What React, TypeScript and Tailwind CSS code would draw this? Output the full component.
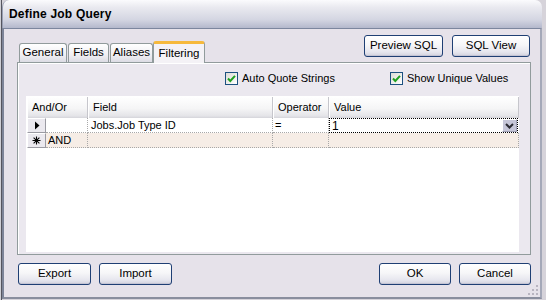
// Define Job Query dialog, XP-style look

import React from "react";

const cellDotted = "border-r border-b border-dotted border-[#a8a8a8]";

// plain XP push button
const XpButton = ({ label, className }: { label: string; className: string }) => (
  <div
    className={
      "h-[22px] rounded-[3px] border border-[#1f3f74] bg-[linear-gradient(to_bottom,#ffffff_0%,#f6f6f8_45%,#e6e6ee_80%,#d2d2de_100%)] shadow-[inset_0_-1px_0_#c4c4d4] flex items-center justify-center text-[11.5px] text-black " +
      className
    }
  >
    {label}
  </div>
);

const CheckBox = ({ label }: { label: string }) => (
  <div className="flex items-center gap-[4px] text-[11px] text-black">
    <div className="w-[13px] h-[13px] border border-[#1c5180] bg-[linear-gradient(135deg,#dcdcd6,#ffffff)] flex items-center justify-center">
      <svg width="11" height="11" viewBox="0 0 11 11">
        <path d="M2 5.5 L4.3 8 L9 2.8" fill="none" stroke="#21a121" strokeWidth="2" />
      </svg>
    </div>
    <span>{label}</span>
  </div>
);

const Tab = ({ label, className }: { label: string; className: string }) => (
  <div
    className={
      "h-[19px] rounded-t-[3px] border border-b-0 border-[#919b9c] bg-[linear-gradient(to_bottom,#ffffff,#f0eff3_60%,#dcdce4)] flex items-center justify-center text-[11.5px] text-black " +
      className
    }
  >
    {label}
  </div>
);

const RowHead = ({ children }: { children?: React.ReactNode }) => (
  <div className="h-[15px] bg-[#ebe9ef] border border-t-white border-l-white border-r-[#9a9aa2] border-b-[#9a9aa2] flex items-center justify-center">
    {children}
  </div>
);

const HeadCell = ({ label }: { label: string }) => (
  <div className="h-[21px] bg-[linear-gradient(to_bottom,#ffffff_0%,#f5f5f6_55%,#e4e4e8_90%,#d4d4da_100%)] border-r border-r-[#c6c6cc] border-l border-l-white flex items-center pl-[4px] text-[11px] text-black">
    {label}
  </div>
);

const App = () => {
  return (
    <div className="w-[546px] h-[300px] flex bg-[#d6d3da] font-['Liberation_Sans',Arial,sans-serif] overflow-hidden">
      {/* outside edge */}
      <div className="w-[2px] h-full bg-[#cfcfd6] border-r border-[#55555f]" />

      {/* window */}
      <div className="w-[540px] h-[299px] flex flex-col">
        {/* title bar */}
        <div className="h-[28px] rounded-t-[7px] border-l border-[#9aa0b4] bg-[linear-gradient(to_bottom,#fbfbfd_0%,#eaeaf0_25%,#d4d6e2_70%,#b4b8cc_100%)] flex items-center pl-[6px]">
          <span className="text-[12px] font-bold text-black tracking-[0.2px]">Define Job Query</span>
        </div>

        {/* client area */}
        <div className="relative flex-1 flex flex-col bg-[#e6e2ea] border-t border-t-[#7c869e] border-l-2 border-l-[#7d8498] border-r-2 border-r-[#a4a8b8] border-b-2 border-b-[#8a8e9e]">
          {/* tabs + top buttons */}
          <div className="h-[33px] flex pl-[13px] pr-[9px]">
            <div className="flex items-end pl-[2px]">
              <Tab label="General" className="w-[48px]" />
              <Tab label="Fields" className="w-[41px] ml-[1px]" />
              <Tab label="Aliases" className="w-[43px] ml-[1px]" />
              <div className="relative z-10 h-[22px] w-[52px] -mb-[1px] rounded-t-[3px] border-x border-[#919b9c] border-t-[3px] border-t-[#f6b93c] bg-[#f4f2f6] flex items-center justify-center text-[11.5px] text-black">
                Filtering
              </div>
            </div>
            <div className="flex-1" />
            <div className="flex gap-[9px] mt-[6px] mr-[1px]">
              <XpButton label="Preview SQL" className="w-[79px]" />
              <XpButton label="SQL View" className="w-[78px]" />
            </div>
          </div>

          {/* tab panel */}
          <div className="ml-[13px] w-[514px] h-[193px] border border-[#919b9c] bg-[#ebe8ef] shadow-[inset_1px_1px_0_#ffffff] flex flex-col">
            <div className="h-[13px] mt-[7px] flex">
              <div className="ml-[207px]">
                <CheckBox label="Auto Quote Strings" />
              </div>
              <div className="ml-[55px]">
                <CheckBox label="Show Unique Values" />
              </div>
            </div>

            {/* criteria grid */}
            <div className="ml-[8px] mt-[13px] w-[493px] h-[156px] bg-white pl-[1px] pt-[1px] text-[11px] text-black">
              <div className="grid grid-cols-[61px_185px_56px_190px]">
                <HeadCell label="And/Or" />
                <HeadCell label="Field" />
                <HeadCell label="Operator" />
                <HeadCell label="Value" />
              </div>

              {/* row 1 */}
              <div className="grid grid-cols-[19px_42px_185px_56px_190px] bg-white">
                <RowHead>
                  <svg width="6" height="9" viewBox="0 0 6 9">
                    <path d="M1 0.5 L5.5 4.5 L1 8.5 Z" fill="#000" />
                  </svg>
                </RowHead>
                <div className={"h-[15px] " + cellDotted} />
                <div className={"h-[15px] pl-[3px] flex items-center " + cellDotted}>Jobs.Job Type ID</div>
                <div className={"h-[15px] pl-[2px] flex items-center " + cellDotted}>=</div>
                <div className="h-[15px] border border-dotted border-black flex items-center mr-[1px]">
                  <span className="pl-[2px] flex-1 text-[12px]">1</span>
                  <div className="w-[15px] h-[13px] bg-[#c6c6d8] border border-t-white border-l-white border-r-[#a0a0b4] border-b-[#a0a0b4] flex items-center justify-center">
                    <svg width="9" height="6" viewBox="0 0 9 6">
                      <path d="M1 1 L4.5 4.5 L8 1" fill="none" stroke="#2c2c34" strokeWidth="2" />
                    </svg>
                  </div>
                </div>
              </div>

              {/* new row */}
              <div className="grid grid-cols-[19px_42px_185px_56px_190px] bg-[#f6ede6]">
                <RowHead>
                  <svg width="9" height="9" viewBox="0 0 9 9">
                    <path d="M4.5 0.5 V8.5 M0.5 4.5 H8.5 M1.6 1.6 L7.4 7.4 M7.4 1.6 L1.6 7.4" stroke="#000" strokeWidth="1.1" />
                  </svg>
                </RowHead>
                <div className={"h-[15px] pl-[2px] flex items-center " + cellDotted}>AND</div>
                <div className={"h-[15px] " + cellDotted} />
                <div className={"h-[15px] " + cellDotted} />
                <div className={"h-[15px] " + cellDotted} />
              </div>
            </div>
          </div>

          {/* bottom buttons */}
          <div className="flex mt-[8px] pl-[14px] pr-[9px]">
            <XpButton label="Export" className="w-[73px]" />
            <XpButton label="Import" className="w-[73px] ml-[8px]" />
            <div className="flex-1" />
            <XpButton label="OK" className="w-[72px]" />
            <XpButton label="Cancel" className="w-[72px] ml-[8px]" />
          </div>

          {/* size grip */}
          <svg className="absolute right-[1px] bottom-[1px]" width="11" height="11" viewBox="0 0 11 11">
            <rect x="8" y="0" width="2" height="2" fill="#b8b4c0" />
            <rect x="4" y="4" width="2" height="2" fill="#b8b4c0" />
            <rect x="8" y="4" width="2" height="2" fill="#b8b4c0" />
            <rect x="0" y="8" width="2" height="2" fill="#b8b4c0" />
            <rect x="4" y="8" width="2" height="2" fill="#b8b4c0" />
            <rect x="8" y="8" width="2" height="2" fill="#b8b4c0" />
          </svg>
        </div>
      </div>

      <div className="flex-1 h-full bg-[#d6d3da]" />
    </div>
  );
};

export default App;
